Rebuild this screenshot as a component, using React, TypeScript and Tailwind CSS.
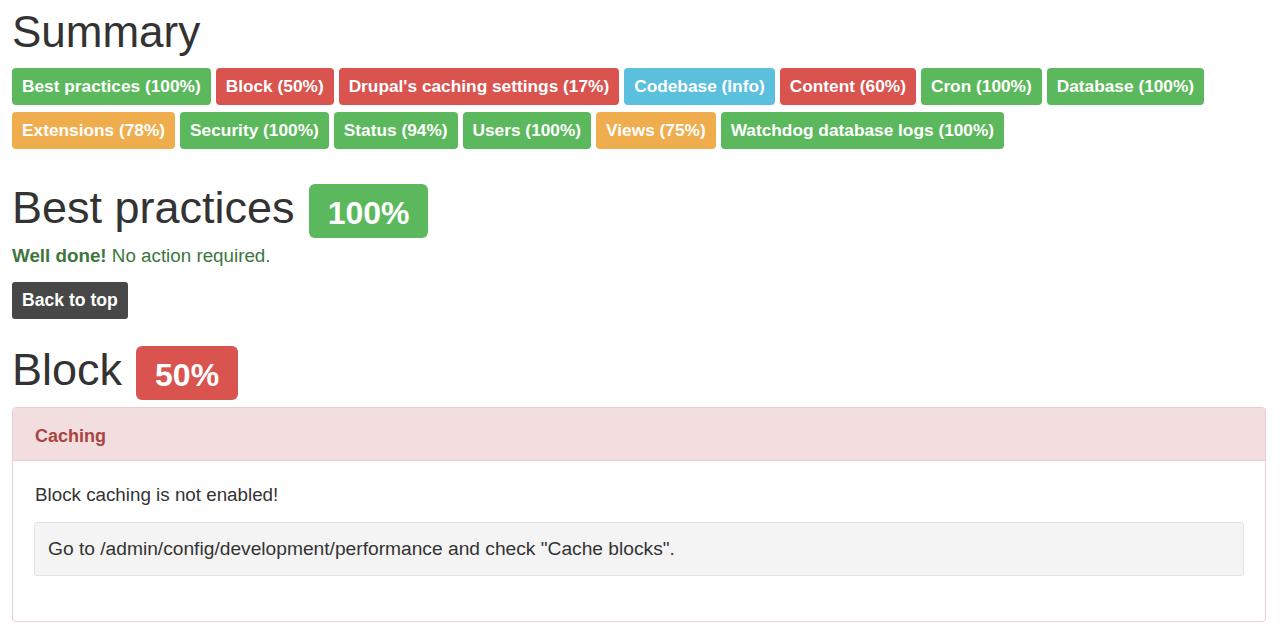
const summary = [
  { label: 'Best practices (100%)', tone: 'green' },
  { label: 'Block (50%)', tone: 'red' },
  { label: "Drupal's caching settings (17%)", tone: 'red' },
  { label: 'Codebase (Info)', tone: 'blue' },
  { label: 'Content (60%)', tone: 'red' },
  { label: 'Cron (100%)', tone: 'green' },
  { label: 'Database (100%)', tone: 'green' },
  { label: 'Extensions (78%)', tone: 'orange' },
  { label: 'Security (100%)', tone: 'green' },
  { label: 'Status (94%)', tone: 'green' },
  { label: 'Users (100%)', tone: 'green' },
  { label: 'Views (75%)', tone: 'orange' },
  { label: 'Watchdog database logs (100%)', tone: 'green' },
];

const toneClass: Record<string, string> = {
  green: 'bg-[#5cb85c]',
  red: 'bg-[#d9534f]',
  blue: 'bg-[#5bc0de]',
  orange: 'bg-[#f0ad4e]',
};

function SectionTitle({ title, score, tone }: { title: string; score: string; tone: string }) {
  return (
    <div className="flex items-start gap-[14px]">
      <h2 className="text-[45px] leading-[48px] font-normal text-[#333]">{title}</h2>
      <span
        className={`flex h-[54px] items-center rounded-[6px] px-[19px] pt-[4px] text-[32px] leading-none font-bold text-white ${toneClass[tone]}`}
      >
        {score}
      </span>
    </div>
  );
}

export default function App() {
  return (
    <div className="min-h-screen bg-white pt-[8px] pr-[18px] pl-[12px] font-['Liberation_Sans',Arial,sans-serif] text-[18.8px] text-[#333]">
      <h1 className="text-[44px] leading-[48px] font-normal">Summary</h1>

      <div className="mt-[12px] flex flex-wrap gap-x-[5px] gap-y-[7px]">
        {summary.map((item) => (
          <a
            key={item.label}
            href="#"
            className={`flex h-[37px] items-center rounded-[4px] px-[10px] text-[17.3px] leading-none font-bold text-white ${toneClass[item.tone]}`}
          >
            {item.label}
          </a>
        ))}
      </div>

      <div className="mt-[35px]">
        <SectionTitle title="Best practices" score="100%" tone="green" />
      </div>
      <p className="mt-[5px] leading-[26px] text-[#3c763d]">
        <strong>Well done!</strong> No action required.
      </p>
      <button
        type="button"
        className="mt-[13px] flex h-[37px] items-center rounded-[3px] bg-[#474747] px-[10px] text-[17.6px] leading-none font-bold text-white"
      >
        Back to top
      </button>

      <div className="mt-[27px]">
        <SectionTitle title="Block" score="50%" tone="red" />
      </div>

      <div className="mt-[7px] rounded-[4px] border border-[#ebccd1]">
        <div className="flex h-[53px] items-center rounded-t-[3px] border-b border-[#ebccd1] bg-[#f2dede] pt-[4px] pl-[22px]">
          <h3 className="text-[18px] leading-[26px] font-bold text-[#a94442]">Caching</h3>
        </div>
        <div className="px-[21px] pt-[21px] pb-[45px]">
          <p className="pl-[1px] leading-[26px]">Block caching is not enabled!</p>
          <div className="mt-[14px] rounded-[3px] border border-[#e3e3e3] bg-[#f4f4f4] px-[13px] py-[13px] text-[19.2px] leading-[26px]">
            Go to /admin/config/development/performance and check "Cache blocks".
          </div>
        </div>
      </div>
    </div>
  );
}
